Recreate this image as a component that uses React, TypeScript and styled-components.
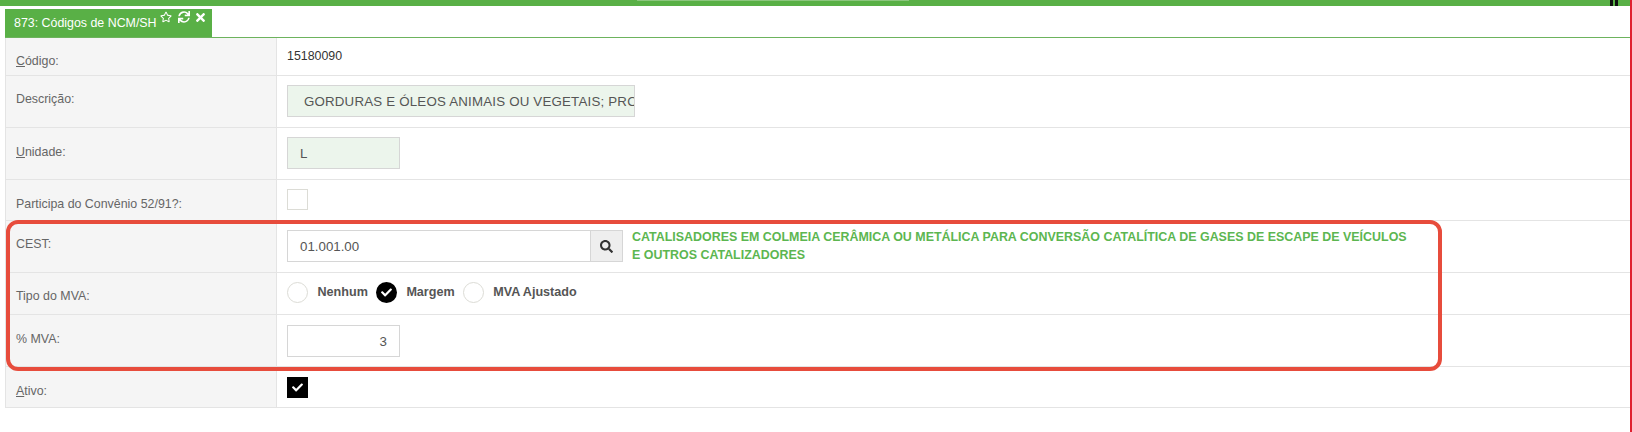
import React from "react";
import styled, { createGlobalStyle } from "styled-components";
import { FaRegStar, FaSync, FaTimes, FaSearch, FaCheck } from "react-icons/fa";

const GlobalStyle = createGlobalStyle`
  html, body {
    margin: 0;
    padding: 0;
    background: #fff;
    font-family: "Liberation Sans", Arial, sans-serif;
    font-size: 12.4px;
    color: #555;
  }
`;

const Page = styled.div`
  position: relative;
  width: 1632px;
  height: 432px;
  overflow: hidden;
  background: #fff;
`;

const TopBar = styled.div`
  height: 6px;
  background: #59b046;
  display: flex;
  justify-content: center;
`;

const TopStrip = styled.div`
  width: 272px;
  height: 1px;
  margin-right: 86px;
  background: #8cc67e;
`;

const TopMark = styled.div`
  position: absolute;
  top: 0;
  left: 1610px;
  width: 8px;
  height: 6px;
  background: linear-gradient(90deg, #111 0 3px, transparent 3px 5px, #111 5px 8px);
`;

const EdgeLine = styled.div`
  position: absolute;
  top: 0;
  right: 0;
  width: 2px;
  height: 100%;
  background: #e0202f;
`;

const TabStrip = styled.div`
  margin: 3px 0 0 5px;
  height: 28px;
  display: flex;
  border-bottom: 1px solid #6db35d;
`;

const Tab = styled.div`
  width: 207px;
  height: 28px;
  display: flex;
  background: #59b046;
  color: #fff;
  padding-left: 9px;
  box-sizing: border-box;
  line-height: 28px;
`;

const TabIcons = styled.div`
  display: flex;
  gap: 6px;
  margin-left: 3px;
  padding-top: 2px;
  height: 13px;
`;

const CloseIcon = styled(FaTimes)`
  margin-left: -2px;
`;

const Form = styled.div`
  margin-left: 5px;
  border-left: 1px solid #e4e4e4;
`;

const Row = styled.div<{ $height: number }>`
  display: grid;
  grid-template-columns: 271px 1fr;
  box-sizing: border-box;
  height: ${(p) => p.$height}px;
  border-bottom: 1px solid #e4e4e4;
`;

const Label = styled.div<{ $top: number }>`
  background: #f5f5f5;
  border-right: 1px solid #e4e4e4;
  padding: ${(p) => p.$top}px 0 0 10px;
  color: #666;
`;

const Key = styled.span`
  text-decoration: underline;
`;

const Value = styled.div<{ $top?: number }>`
  display: flex;
  align-items: flex-start;
  padding: ${(p) => p.$top ?? 9}px 0 0 10px;
`;

const PlainValue = styled.div`
  color: #333;
  padding-top: 2px;
`;

const Field = styled.div<{ $width: number; $readOnly?: boolean; $right?: boolean }>`
  width: ${(p) => p.$width}px;
  height: 32px;
  box-sizing: border-box;
  border: 1px solid #d6d6d6;
  background: ${(p) => (p.$readOnly ? "#ecf5ec" : "#fff")};
  padding: 0 ${(p) => (p.$readOnly ? 0 : 12)}px 0 12px;
  line-height: 32px;
  font-size: 13.3px;
  color: #555;
  white-space: nowrap;
  overflow: hidden;
  text-align: ${(p) => (p.$right ? "right" : "left")};
`;

const LongField = styled(Field)`
  letter-spacing: 0.2px;
`;

const SearchButton = styled.div`
  width: 32px;
  height: 32px;
  box-sizing: border-box;
  border: 1px solid #d6d6d6;
  border-left: 0;
  background: #eee;
  color: #333;
  display: flex;
  align-items: center;
  justify-content: center;
  font-size: 13px;
`;

const Hint = styled.div`
  margin: -2px 0 0 9px;
  width: 780px;
  color: #5cb650;
  font-size: 12.45px;
  font-weight: bold;
  line-height: 18px;
`;

const Box = styled.div<{ $checked?: boolean; $round?: boolean }>`
  width: 21px;
  height: 21px;
  box-sizing: border-box;
  flex: none;
  display: flex;
  align-items: center;
  justify-content: center;
  border: ${(p) => (p.$checked ? "0" : "1px solid #dcdcd6")};
  border-radius: ${(p) => (p.$round ? "50%" : "0")};
  background: ${(p) => (p.$checked ? "#000" : "#fff")};
  color: #fff;
  font-size: 11px;
`;

const RadioGroup = styled.div`
  display: flex;
  align-items: center;
  height: 21px;
`;

const RadioText = styled.span`
  font-weight: bold;
  font-size: 12.6px;
  color: #555;
  margin: 0 8px 2px 9.5px;
`;

const Highlight = styled.div`
  position: absolute;
  left: 6px;
  top: 220px;
  width: 1436px;
  height: 151px;
  box-sizing: border-box;
  border: 4px solid #e74c3c;
  border-radius: 12px;
`;

export default function App() {
  return (
    <Page>
      <GlobalStyle />
      <TopBar>
        <TopStrip />
      </TopBar>
      <TopMark />
      <TabStrip>
        <Tab>
          873: Códigos de NCM/SH
          <TabIcons>
            <FaRegStar size={12} />
            <FaSync size={12} />
            <CloseIcon size={13} />
          </TabIcons>
        </Tab>
      </TabStrip>
      <Form>
        <Row $height={38}>
          <Label $top={16}>
            <Key>C</Key>ódigo:
          </Label>
          <Value>
            <PlainValue>15180090</PlainValue>
          </Value>
        </Row>
        <Row $height={52}>
          <Label $top={16}>Descrição:</Label>
          <Value>
            <LongField $width={348} $readOnly>
              &nbsp;GORDURAS E ÓLEOS ANIMAIS OU VEGETAIS; PRO
            </LongField>
          </Value>
        </Row>
        <Row $height={52}>
          <Label $top={17}>
            <Key>U</Key>nidade:
          </Label>
          <Value>
            <Field $width={113} $readOnly>
              L
            </Field>
          </Value>
        </Row>
        <Row $height={41}>
          <Label $top={17}>Participa do Convênio 52/91?:</Label>
          <Value>
            <Box />
          </Value>
        </Row>
        <Row $height={52}>
          <Label $top={16}>CEST:</Label>
          <Value>
            <Field $width={304}>01.001.00</Field>
            <SearchButton>
              <FaSearch />
            </SearchButton>
            <Hint>
              CATALISADORES EM COLMEIA CERÂMICA OU METÁLICA PARA CONVERSÃO CATALÍTICA DE GASES DE ESCAPE DE
              VEÍCULOS E OUTROS CATALIZADORES
            </Hint>
          </Value>
        </Row>
        <Row $height={42}>
          <Label $top={16}>Tipo do MVA:</Label>
          <Value>
            <RadioGroup>
              <Box $round />
              <RadioText>Nenhum</RadioText>
              <Box $round $checked>
                <FaCheck />
              </Box>
              <RadioText>Margem</RadioText>
              <Box $round />
              <RadioText>MVA Ajustado</RadioText>
            </RadioGroup>
          </Value>
        </Row>
        <Row $height={52}>
          <Label $top={17}>% MVA:</Label>
          <Value $top={10}>
            <Field $width={113} $right>
              3
            </Field>
          </Value>
        </Row>
        <Row $height={41}>
          <Label $top={17}>
            <Key>A</Key>tivo:
          </Label>
          <Value $top={10}>
            <Box $checked>
              <FaCheck />
            </Box>
          </Value>
        </Row>
      </Form>
      <Highlight />
      <EdgeLine />
    </Page>
  );
}
